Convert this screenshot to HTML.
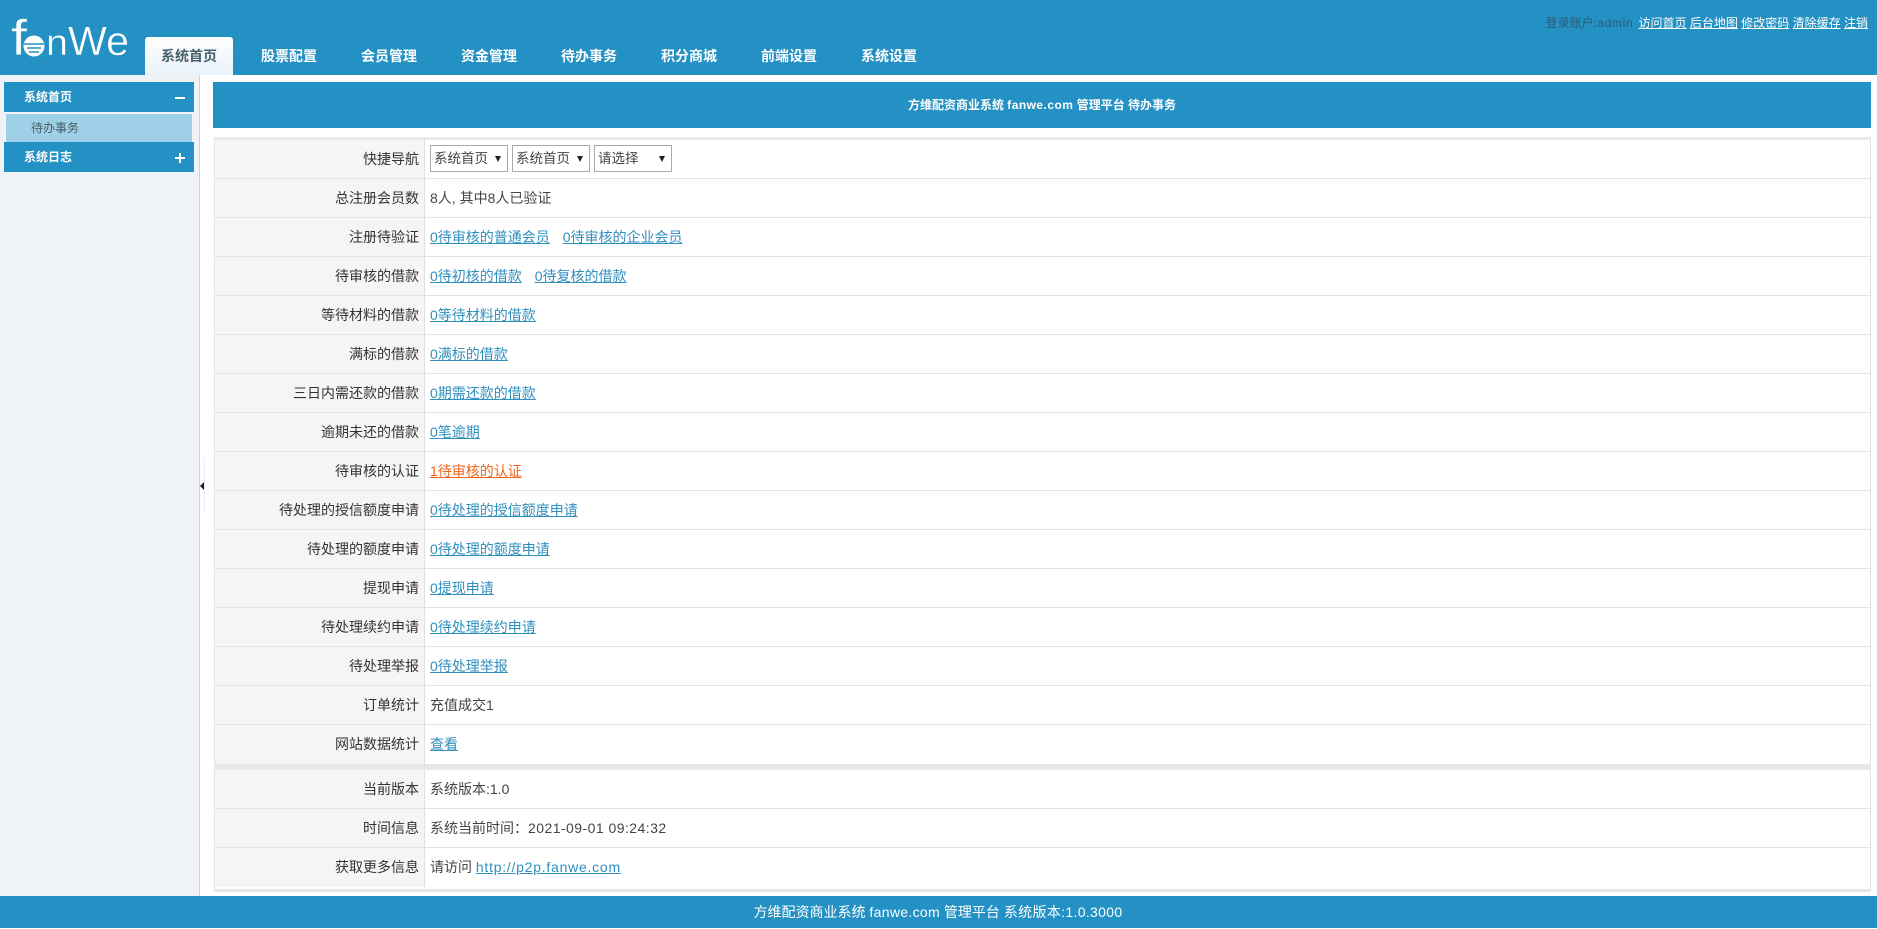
<!DOCTYPE html>
<html lang="zh"><head><meta charset="utf-8"><title>方维配资商业系统 fanwe.com 管理平台</title>
<style>
*{box-sizing:border-box}
html,body{margin:0;padding:0;width:1877px;height:929px;overflow:hidden;background:#fff;font-family:"Liberation Sans","Noto Sans CJK SC",sans-serif;color:#333}
a{color:#2f8fbd}
.abs{position:absolute}
#hd{left:0;top:0;width:1877px;height:75px;background:#2391c3}
.tab{position:absolute;top:37px;height:38px;line-height:39px;font-size:14px;font-weight:bold;color:#fff;text-align:center;width:100px}
#t0{left:145px;width:88px;background:linear-gradient(#fff,#e9f2f9);border-radius:3px 3px 0 0;color:#46606e}
#top{position:absolute;top:14px;right:9px;font-size:12px;line-height:18px;color:#2c5d78;white-space:nowrap}
#top a{color:#fff}
#top b{font-weight:normal;letter-spacing:.6px;margin-right:2px}
#side{left:0;top:75px;width:200px;height:821px;background:#eff3f7;border-right:1px solid #c9d3db}
.sh{position:absolute;left:4px;width:190px;height:30px;background:#2391c3;color:#fff;font-size:12px;font-weight:bold;line-height:31px;padding-left:20px}
.sh i{position:absolute;left:170px;top:8px;width:12px;height:16px}
.sh i:before{content:"";position:absolute;left:1px;top:7px;width:10px;height:2px;background:#fff}
.plus:after{content:"";position:absolute;left:5px;top:3px;width:2px;height:10px;background:#fff}
#sub{left:6px;top:114px;width:186px;height:28px;background:#9ed1e8;font-size:12px;line-height:29px;padding-left:25px;color:#4a5a63}
#split{left:200px;top:457px;width:5px;height:56px;background:#fff;border-right:1px solid #e8ecef;border-radius:0 4px 4px 0}
#split:after{content:"";position:absolute;left:0;top:25px;border:4px solid transparent;border-right:4px solid #222;border-left:0}
#tt{left:213px;top:82px;width:1658px;height:46px;background:#2391c3;color:#fff;font-size:12px;font-weight:bold;text-align:center;line-height:47px}
#tt span{letter-spacing:.45px}
.wrap{position:absolute;left:214px;width:1657px;border:1px solid #e4e4e4;border-top:3px solid #ebe8e8;border-bottom:3px solid #e8e6e6;background:#fff}
.r{height:39px;border-bottom:1px solid #e4e4e4;display:flex;font-size:14px;line-height:38px}
.r:last-child{border-bottom:0}
.l{width:210px;flex:none;background:#f5f5f5;border-right:1px solid #e0e0e0;text-align:right;padding-right:5px;color:#333}
.v{padding-left:5px;color:#444;white-space:nowrap}
.v a+a{margin-left:9px}
.sel{display:inline-block;position:relative;height:27px;width:78px;border:1px solid #aaa;background:#fff;margin:5px 4px 0 0;line-height:25px;padding-left:3px;font-size:13.5px;vertical-align:top;color:#444}
.sel:after{content:"";position:absolute;right:6px;top:10px;border:3px solid transparent;border-top:6px solid #222;border-bottom:0}
#ft{left:0;top:896px;width:1877px;height:32px;background:#2391c3;color:#fff;font-size:14px;line-height:32px;text-align:center;padding-right:1px}
#ft span{letter-spacing:.33px}
</style></head><body>
<div class="abs" id="hd">
<svg class="abs" style="left:0;top:0" width="140" height="70" viewBox="0 0 140 70">
<g font-family="Liberation Sans" fill="#fff" stroke="#2391c3" stroke-width=".4">
<text x="11" y="55" font-size="50" textLength="16" lengthAdjust="spacingAndGlyphs">f</text>
<text x="46" y="55" font-size="37" textLength="22" lengthAdjust="spacingAndGlyphs">n</text>
<text x="68" y="55" font-size="41" textLength="61" lengthAdjust="spacingAndGlyphs">We</text>
</g>
<circle cx="34" cy="46" r="10.5" fill="#fff"/>
<path d="M24 44H44M27 48H41M29 52H39" stroke="#2391c3" stroke-width="1.5" fill="none"/>
</svg>
<div class="tab" id="t0">系统首页</div>
<div class="tab" style="left:239px">股票配置</div>
<div class="tab" style="left:339px">会员管理</div>
<div class="tab" style="left:439px">资金管理</div>
<div class="tab" style="left:539px">待办事务</div>
<div class="tab" style="left:639px">积分商城</div>
<div class="tab" style="left:739px">前端设置</div>
<div class="tab" style="left:839px">系统设置</div>
<div id="top">登录账户<b>:admin</b> <a href="#">访问首页</a> <a href="#">后台地图</a> <a href="#">修改密码</a> <a href="#">清除缓存</a> <a href="#">注销</a></div>
</div>
<div class="abs" id="side"></div>
<div class="sh" style="top:82px">系统首页<i></i></div>
<div class="abs" id="sub">待办事务</div>
<div class="sh" style="top:142px">系统日志<i class="plus"></i></div>
<div class="abs" id="split"></div>
<div class="abs" id="tt">方维配资商业系统 <span>fanwe.com</span> 管理平台 待办事务</div>
<div class="wrap" style="top:137px;height:630px">
<div class="r"><div class="l">快捷导航</div><div class="v"><span class="sel">系统首页</span><span class="sel">系统首页</span><span class="sel">请选择</span></div></div>
<div class="r"><div class="l">总注册会员数</div><div class="v">8人, 其中8人已验证</div></div>
<div class="r"><div class="l">注册待验证</div><div class="v"><a href="#">0待审核的普通会员</a> <a href="#">0待审核的企业会员</a></div></div>
<div class="r"><div class="l">待审核的借款</div><div class="v"><a href="#">0待初核的借款</a> <a href="#">0待复核的借款</a></div></div>
<div class="r"><div class="l">等待材料的借款</div><div class="v"><a href="#">0等待材料的借款</a></div></div>
<div class="r"><div class="l">满标的借款</div><div class="v"><a href="#">0满标的借款</a></div></div>
<div class="r"><div class="l">三日内需还款的借款</div><div class="v"><a href="#">0期需还款的借款</a></div></div>
<div class="r"><div class="l">逾期未还的借款</div><div class="v"><a href="#">0笔逾期</a></div></div>
<div class="r"><div class="l">待审核的认证</div><div class="v"><a href="#" style="color:#f0641e">1待审核的认证</a></div></div>
<div class="r"><div class="l">待处理的授信额度申请</div><div class="v"><a href="#">0待处理的授信额度申请</a></div></div>
<div class="r"><div class="l">待处理的额度申请</div><div class="v"><a href="#">0待处理的额度申请</a></div></div>
<div class="r"><div class="l">提现申请</div><div class="v"><a href="#">0提现申请</a></div></div>
<div class="r"><div class="l">待处理续约申请</div><div class="v"><a href="#">0待处理续约申请</a></div></div>
<div class="r"><div class="l">待处理举报</div><div class="v"><a href="#">0待处理举报</a></div></div>
<div class="r"><div class="l">订单统计</div><div class="v">充值成交1</div></div>
<div class="r"><div class="l">网站数据统计</div><div class="v"><a href="#">查看</a></div></div>
</div>
<div class="wrap" style="top:767px;height:125px">
<div class="r"><div class="l">当前版本</div><div class="v">系统版本:1.0</div></div>
<div class="r"><div class="l">时间信息</div><div class="v">系统当前时间：<span style="letter-spacing:.45px">2021-09-01 09:24:32</span></div></div>
<div class="r"><div class="l">获取更多信息</div><div class="v">请访问 <a href="#" style="letter-spacing:.75px">http://p2p.fanwe.com</a></div></div>
</div>
<div class="abs" id="ft">方维配资商业系统 <span>fanwe.com</span> 管理平台 <span>系统版本:1.0.3000</span></div>
</body></html>
